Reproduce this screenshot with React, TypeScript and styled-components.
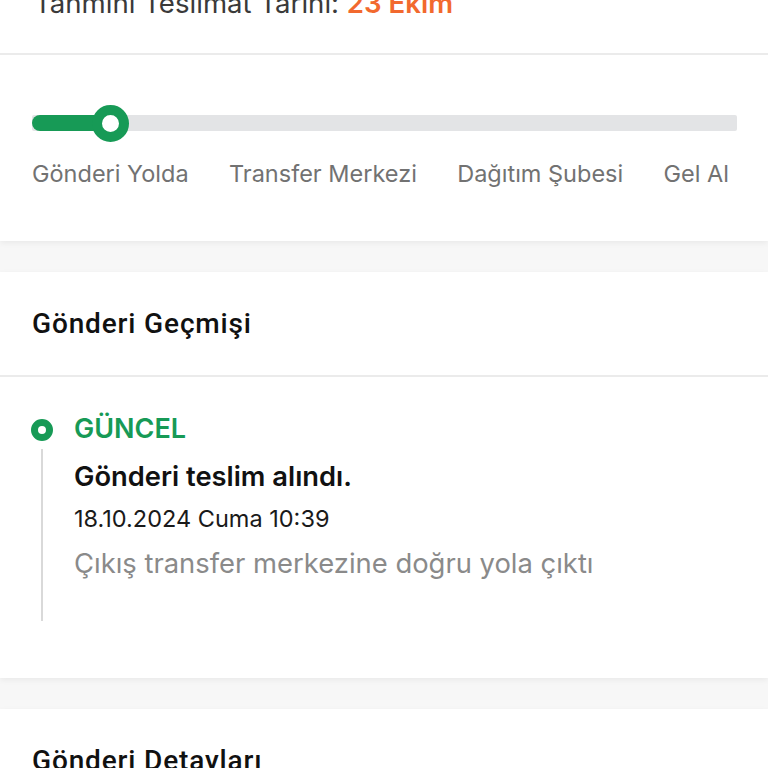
import React from "react";
import styled, { createGlobalStyle } from "styled-components";

const GlobalStyle = createGlobalStyle`
  html, body { margin: 0; padding: 0; background: #f7f7f7; }
  body { font-family: Inter, "Noto Sans", sans-serif; -webkit-font-smoothing: antialiased; }
  * { box-sizing: border-box; }
`;

const Page = styled.div`
  display: flex;
  flex-direction: column;
  gap: 31px;
  width: 768px;
  height: 768px;
  overflow: hidden;
  background: #f7f7f7;
`;

const Card = styled.section`
  background: #fff;
  box-shadow: 0 2px 6px rgba(0, 0, 0, 0.06);
`;

const EstimateRow = styled.div`
  height: 55px;
  overflow: hidden;
  border-bottom: 2px solid #ebebeb;
  padding-left: 34px;
`;

const EstimateText = styled.div`
  margin-top: -14px;
  font-size: 27.6px;
  line-height: 34px;
  color: #3a3a3a;
  white-space: nowrap;
  span { color: #f2692e; font-weight: 600; }
`;

const ProgressBlock = styled.div`
  padding: 50px 31px 52px 32px;
`;

const TrackWrap = styled.div`
  position: relative;
  height: 36px;
  display: flex;
  align-items: center;
`;

const Track = styled.div`
  width: 100%;
  height: 16px;
  border-radius: 2px;
  background: #e3e4e6;
  overflow: hidden;
`;

const Fill = styled.div`
  height: 100%;
  background: #179a56;
  border-radius: 8px;
`;

const Knob = styled.div`
  position: absolute;
  top: 0;
  width: 37px;
  height: 37px;
  border-radius: 50%;
  background: #fff;
  border: 10px solid #179a56;
`;

const Steps = styled.div`
  display: flex;
  justify-content: space-between;
  margin-top: 18px;
  padding-right: 8px;
`;

const Step = styled.span`
  font-size: 23.5px;
  line-height: 30px;
  color: #727272;
`;

const SectionHeader = styled.div`
  height: 105px;
  display: flex;
  align-items: center;
  padding: 0 32px;
  border-bottom: 2px solid #ebebeb;
`;

const SectionTitle = styled.h2`
  margin: 0;
  font-family: Roboto, "Liberation Sans", sans-serif;
  font-size: 28px;
  font-weight: 500;
  letter-spacing: 0.85px;
  color: #111;
`;

const Timeline = styled.div`
  padding: 36px 32px 57px 31px;
`;

const Entry = styled.div`
  display: grid;
  grid-template-columns: 22px 1fr;
  column-gap: 21px;
`;

const Rail = styled.div`
  display: flex;
  flex-direction: column;
  align-items: center;
`;

const Dot = styled.div`
  margin-top: 6px;
  width: 22px;
  height: 22px;
  border-radius: 50%;
  border: 7px solid #179a56;
  background: #fff;
`;

const Line = styled.div`
  flex: 1;
  width: 2px;
  margin-top: 8px;
  background: #d9d9d9;
`;

const EntryBody = styled.div`
  display: flex;
  flex-direction: column;
  padding-bottom: 41px;
`;

const Status = styled.div`
  font-size: 27px;
  line-height: 32px;
  font-weight: 600;
  color: #179a56;
`;

const EntryTitle = styled.div`
  margin-top: 15px;
  font-size: 27.3px;
  line-height: 34px;
  font-weight: 600;
  color: #111;
`;

const EntryDate = styled.div`
  margin-top: 10px;
  font-size: 23.5px;
  line-height: 30px;
  color: #1a1a1a;
`;

const EntryNote = styled.div`
  margin-top: 12px;
  font-size: 27.4px;
  line-height: 34px;
  color: #8a8a8a;
`;

const steps = ["Gönderi Yolda", "Transfer Merkezi", "Dağıtım Şubesi", "Gel Al"];

export default function App() {
  const progress = 11;
  return (
    <Page>
      <GlobalStyle />
      <Card>
        <EstimateRow>
          <EstimateText>
            Tahmini Teslimat Tarihi: <span>23 Ekim</span>
          </EstimateText>
        </EstimateRow>
        <ProgressBlock>
          <TrackWrap>
            <Track>
              <Fill style={{ width: `${progress}%` }} />
            </Track>
            <Knob style={{ left: `calc(${progress}% - 18px)` }} />
          </TrackWrap>
          <Steps>
            {steps.map((s) => (
              <Step key={s}>{s}</Step>
            ))}
          </Steps>
        </ProgressBlock>
      </Card>

      <Card>
        <SectionHeader>
          <SectionTitle>Gönderi Geçmişi</SectionTitle>
        </SectionHeader>
        <Timeline>
          <Entry>
            <Rail>
              <Dot />
              <Line />
            </Rail>
            <EntryBody>
              <Status>GÜNCEL</Status>
              <EntryTitle>Gönderi teslim alındı.</EntryTitle>
              <EntryDate>18.10.2024 Cuma 10:39</EntryDate>
              <EntryNote>Çıkış transfer merkezine doğru yola çıktı</EntryNote>
            </EntryBody>
          </Entry>
        </Timeline>
      </Card>

      <Card>
        <SectionHeader>
          <SectionTitle>Gönderi Detayları</SectionTitle>
        </SectionHeader>
      </Card>
    </Page>
  );
}
